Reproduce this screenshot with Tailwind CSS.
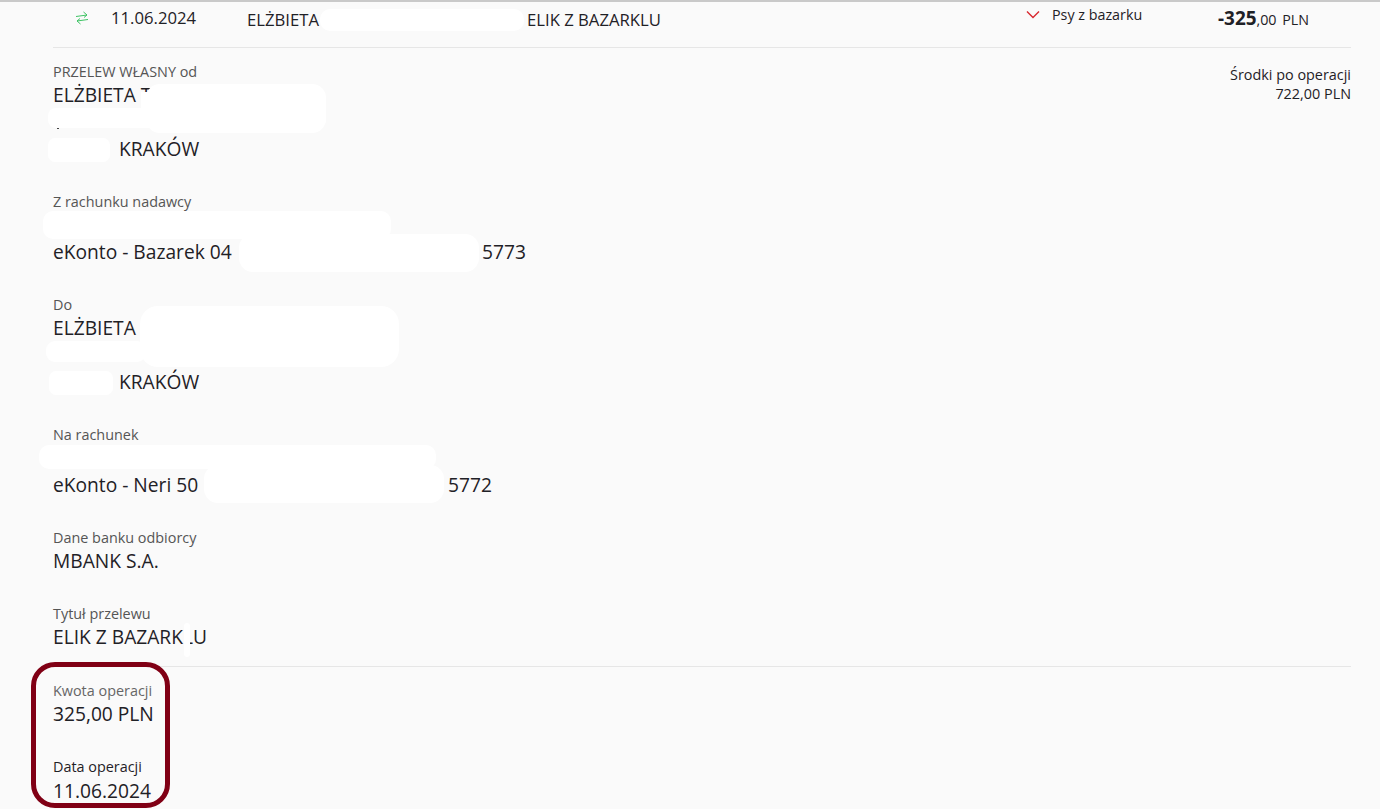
<!DOCTYPE html>
<html lang="pl">
<head>
  <meta charset="UTF-8" />
  <title>Przelew</title>
  <script src="https://cdn.jsdelivr.net/npm/@tailwindcss/browser@4"></script>
</head>
<body class="bg-[#fafafa] text-[#1f2126] font-['Open_Sans',sans-serif] h-[809px] overflow-hidden relative">

  <div class="h-[2px] bg-[#c9c9c9]"></div>

  <!-- top row -->
  <div class="ml-[53px] mr-[29px] h-[46px] border-b border-[#e6e6e6] flex items-start">
    <div class="w-[58px] pl-[22px] pt-[9px]">
      <svg width="14" height="14" viewBox="0 0 14 14" fill="none" stroke="#3fc465" stroke-width="1"><path d="M1 5.500l11-1.500M8.500 1l3.500 3-3 2.500M13 8.500l-11 1.500M5 7.500l-3 2.500 3.500 3"/></svg>
    </div>
    <div class="w-[136px] pt-[4px] text-[16.700px] leading-[23px]">11.06.2024</div>
    <div class="w-[280px] pt-[6px] text-[16.700px] leading-[23px]">ELŻBIETA</div>
    <div class="w-[499px] pt-[6px] text-[16.700px] leading-[23px]">ELIK Z BAZARKLU</div>
    <div class="w-[26px] pt-[8px]">
      <svg width="14" height="10" viewBox="0 0 14 10" fill="none" stroke="#d8282f" stroke-width="1.400"><path d="M1 1.500l6 6 6-6"/></svg>
    </div>
    <div class="w-[166px] pt-[3px] text-[14.300px] leading-[20px]">Psy z bazarku</div>
    <div class="pt-[4px] text-[14.300px] leading-[24px] whitespace-nowrap"><span class="text-[18.900px] font-bold">-325</span>,00 <span class="ml-[2px]">PLN</span></div>
  </div>

  <!-- details -->
  <div class="ml-[53px] mr-[29px] flex justify-between">
    <div class="flex flex-col">
      <section class="mt-[14px]">
        <p class="text-[14.400px] leading-[20px] text-[#555]">PRZELEW WŁASNY od</p>
        <p class="text-[19.200px] leading-[26px]">ELŻBIETA T</p>
        <p class="h-[27px]"></p>
        <p class="text-[19.200px] leading-[27px] pl-[66px]">KRAKÓW</p>
      </section>
      <section class="mt-[30px]">
        <p class="text-[14.400px] leading-[20px] text-[#555]">Z rachunku nadawcy</p>
        <p class="h-[26px]"></p>
        <p class="text-[19.200px] leading-[27px] flex"><span class="w-[429px]">eKonto - Bazarek 04</span><span>5773</span></p>
      </section>
      <section class="mt-[30px]">
        <p class="text-[14.400px] leading-[20px] text-[#555]">Do</p>
        <p class="text-[19.200px] leading-[26px]">ELŻBIETA</p>
        <p class="h-[27px]"></p>
        <p class="text-[19.200px] leading-[27px] pl-[66px]">KRAKÓW</p>
      </section>
      <section class="mt-[30px]">
        <p class="text-[14.400px] leading-[20px] text-[#555]">Na rachunek</p>
        <p class="h-[26px]"></p>
        <p class="text-[19.200px] leading-[27px] flex"><span class="w-[395px]">eKonto - Neri 50</span><span>5772</span></p>
      </section>
      <section class="mt-[30px]">
        <p class="text-[14.400px] leading-[20px] text-[#555]">Dane banku odbiorcy</p>
        <p class="text-[19.200px] leading-[25px]">MBANK S.A.</p>
      </section>
      <section class="mt-[31px]">
        <p class="text-[14.400px] leading-[20px] text-[#555]">Tytuł przelewu</p>
        <p class="text-[19.200px] leading-[26px]">ELIK Z BAZARKLU</p>
      </section>
    </div>
    <div class="mt-[17px] text-right text-[14.400px] leading-[19px]">
      <p>Środki po operacji</p>
      <p>722,00 PLN</p>
    </div>
  </div>

  <div class="ml-[53px] mr-[29px] mt-[16px] border-t border-[#e6e6e6]">
    <section class="mt-[14px]">
      <p class="text-[14.400px] leading-[20px] text-[#666]">Kwota operacji</p>
      <p class="text-[19.200px] leading-[26px]">325,00 PLN</p>
    </section>
    <section class="mt-[30px]">
      <p class="text-[14.400px] leading-[20px]">Data operacji</p>
      <p class="text-[19.200px] leading-[27px]">11.06.2024</p>
    </section>
  </div>

  <!-- white redaction blobs painted over the text -->
  <div class="absolute left-[320px] top-[9px] w-[204px] h-[22px] bg-white rounded-[10px]"></div>
  <div class="absolute left-[146px] top-[84px] w-[180px] h-[49px] bg-white rounded-[14px]"></div>
  <div class="absolute left-[141px] top-[92px] w-[20px] h-[20px] bg-white"></div>
  <div class="absolute left-[48px] top-[108px] w-[278px] h-[20px] bg-white rounded-[8px]"></div>
  <div class="absolute left-[57px] top-[128px] w-[2px] h-px bg-[#444]"></div>
  <div class="absolute left-[48px] top-[138px] w-[62px] h-[24px] bg-white rounded-[7px]"></div>
  <div class="absolute left-[43px] top-[211px] w-[348px] h-[28px] bg-white rounded-[10px]"></div>
  <div class="absolute left-[239px] top-[234px] w-[240px] h-[38px] bg-white rounded-[14px]"></div>
  <div class="absolute left-[140px] top-[306px] w-[259px] h-[61px] bg-white rounded-[18px]"></div>
  <div class="absolute left-[46px] top-[341px] w-[100px] h-[21px] bg-white rounded-[9px]"></div>
  <div class="absolute left-[49px] top-[371px] w-[64px] h-[24px] bg-white rounded-[7px]"></div>
  <div class="absolute left-[39px] top-[445px] w-[397px] h-[24px] bg-white rounded-[10px]"></div>
  <div class="absolute left-[204px] top-[465px] w-[240px] h-[38px] bg-white rounded-[14px]"></div>
  <div class="absolute left-[184px] top-[623px] w-[6px] h-[34px] bg-white rounded-[3px]"></div>

  <!-- dark red highlight -->
  <div class="absolute left-[31px] top-[662px] w-[139px] h-[146px] border-[5px] border-[#800015] rounded-[24px]"></div>
</body>
</html>
